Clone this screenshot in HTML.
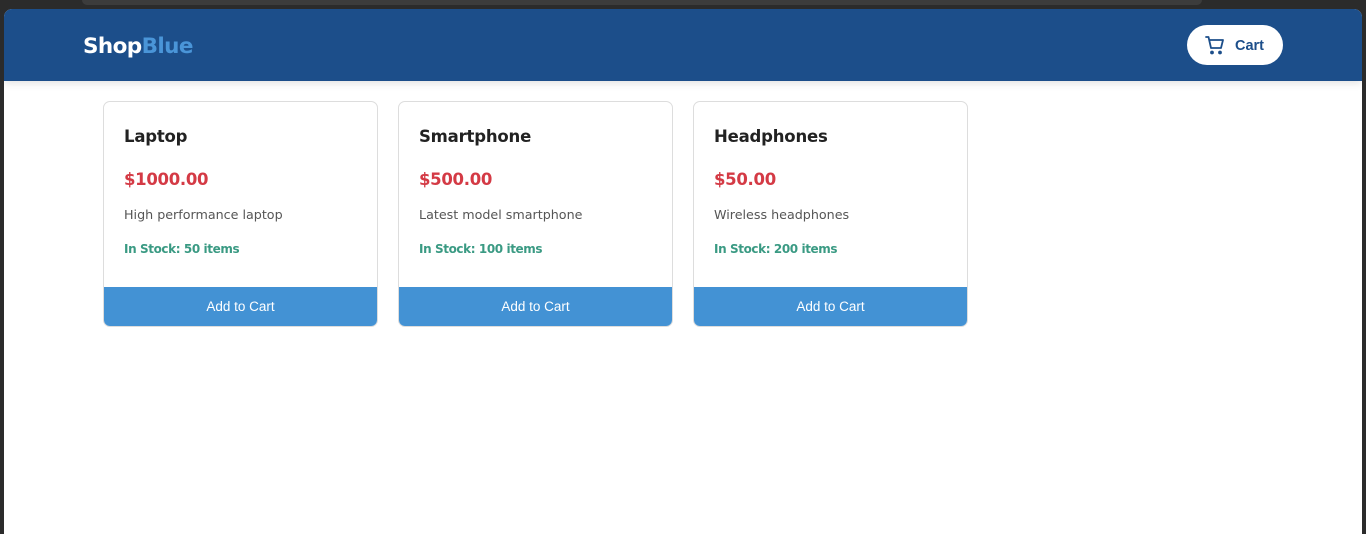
<!DOCTYPE html>
<html><head><meta charset="utf-8"><style>
*{box-sizing:border-box;margin:0;padding:0}
html,body{width:1366px;height:534px;overflow:hidden;background:#2b2b2b;font-family:"DejaVu Sans","Liberation Sans",sans-serif}
.topbar{position:absolute;left:82px;top:0;width:1120px;height:5px;background:#3c3c3c;border-radius:0 0 8px 8px}
.page{position:absolute;left:4px;top:9px;width:1358px;height:525px;background:#fff;border-radius:8px 8px 0 0;overflow:hidden}
.hdr{height:72px;background:#1c4e8a;position:relative;box-shadow:0 2px 8px rgba(0,0,0,.12)}
.logo{position:absolute;left:79px;top:25px;font-size:21.5px;font-weight:bold;color:#fff;letter-spacing:-0.6px}
.logo span{color:#4a95d8}
.cart{position:absolute;left:1183px;top:16px;width:96px;height:40px;background:#fff;border-radius:20px;color:#1c4e8a;font-family:"Liberation Sans",sans-serif;font-weight:bold;font-size:14.5px}
.cart svg{position:absolute;left:18px;top:10px}
.cart b{position:absolute;left:48px;top:13px}
.card{position:absolute;top:92px;width:275px;height:226px;border:1px solid #ddd;border-radius:7px;overflow:hidden;background:#fff}
.card h3{position:absolute;left:20px;top:25px;font-size:16.5px;color:#222;font-weight:bold;letter-spacing:-0.2px}
.price{position:absolute;left:20px;top:68px;font-size:16.5px;color:#d43a45;font-weight:bold;letter-spacing:-0.3px}
.desc{position:absolute;left:20px;top:105px;font-size:12.7px;color:#555}
.stock{position:absolute;left:20px;top:140px;font-size:12px;color:#3a9a83;font-weight:bold;letter-spacing:-0.4px}
.btn{position:absolute;left:0;bottom:0;width:100%;height:39px;background:#4392d4;color:#fff;font-family:"Liberation Sans",sans-serif;font-size:13.5px;text-align:center;line-height:39px}
</style></head><body>
<div class="topbar"></div>
<div class="page">
<div class="hdr"><div class="logo">Shop<span>Blue</span></div>
<div class="cart"><svg width="20" height="20" viewBox="0 0 20 20" fill="none" stroke="#1c4e8a" stroke-width="1.8" stroke-linecap="round" stroke-linejoin="round"><path d="M1 2h2.5l2.5 11h10l2-8H5"/><circle cx="7" cy="17.5" r="1" fill="#1c4e8a"/><circle cx="15" cy="17.5" r="1" fill="#1c4e8a"/></svg><b>Cart</b></div></div>
<div class="card" style="left:99px"><h3>Laptop</h3><div class="price">$1000.00</div><div class="desc">High performance laptop</div><div class="stock">In Stock: 50 items</div><div class="btn">Add to Cart</div></div>
<div class="card" style="left:394px"><h3>Smartphone</h3><div class="price">$500.00</div><div class="desc">Latest model smartphone</div><div class="stock">In Stock: 100 items</div><div class="btn">Add to Cart</div></div>
<div class="card" style="left:689px"><h3>Headphones</h3><div class="price">$50.00</div><div class="desc">Wireless headphones</div><div class="stock">In Stock: 200 items</div><div class="btn">Add to Cart</div></div>
</div>
</body></html>
